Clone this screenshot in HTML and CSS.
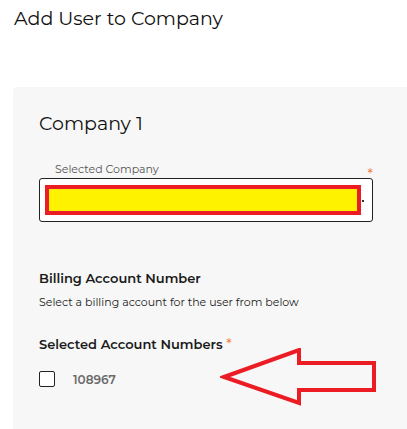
FILE: index.html
```html
<!DOCTYPE html>
<html>
<head>
<meta charset="utf-8">
<link rel="stylesheet" href="styles.css">
</head>
<body>
<h1 class="page-title">Add User to Company</h1>
<section class="card">
  <h2 class="company-title">Company 1</h2>
  <div class="field">
    <div class="field-head">
      <span class="field-label">Selected Company</span>
      <span class="req">*</span>
    </div>
    <div class="select">
      <div class="redact"></div>
      <span class="dot"></span>
    </div>
  </div>
  <h3 class="section-title">Billing Account Number</h3>
  <p class="section-desc">Select a billing account for the user from below</p>
  <h3 class="section-title sel">Selected Account Numbers <span class="req">*</span></h3>
  <label class="check-row">
    <span class="checkbox"></span>
    <span class="acct">108967</span>
  </label>
  <svg class="arrow" width="160" height="60" viewBox="0 0 160 60">
    <polygon points="4,29 79,2 79,15 154,15 154,42 79,42 79,55" fill="none" stroke="#ec1c24" stroke-width="4" stroke-linejoin="miter"/>
  </svg>
</section>
</body>
</html>
```
FILE: styles.css
```css
html, body {
  margin: 0;
  padding: 0;
  background: #ffffff;
  font-family: "Montserrat", "Noto Sans", "Open Sans", sans-serif;
  color: #1a1a1a;
}
body {
  width: 407px;
  height: 429px;
  overflow: hidden;
}
.page-title {
  margin: 0;
  padding: 6px 0 0 14px;
  font-size: 19px;
  font-weight: 400;
  line-height: 26px;
  color: #111;
}
.card {
  position: relative;
  box-sizing: border-box;
  margin: 55px 0 0 13px;
  background: #f7f7f7;
  border-top-left-radius: 4px;
  padding: 24px 34px 0 26px;
  height: 342px;
}
.company-title {
  margin: 0;
  font-size: 19px;
  font-weight: 400;
  line-height: 26px;
  color: #111;
}
.field {
  margin-top: 25px;
}
.field-head {
  display: flex;
  justify-content: space-between;
  padding-left: 16px;
  height: 14px;
}
.field-label {
  font-size: 11px;
  color: #555;
  line-height: 14px;
}
.req {
  color: #f4793f;
  font-size: 14px;
  font-weight: 400;
  line-height: 10px;
}
.field-head .req {
  margin-top: 7px;
}
.select {
  position: relative;
  margin-top: 2px;
  height: 42px;
  border: 1px solid #222;
  border-radius: 3px;
  background: #fff;
  display: flex;
  align-items: center;
  padding-left: 5px;
}
.redact {
  width: 308px;
  height: 22px;
  border: 4px solid #ec1c24;
  background: #fff200;
}
.dot {
  width: 2px;
  height: 2px;
  background: #333;
  margin-left: 1px;
  margin-top: 2px;
}
.section-title {
  margin: 47px 0 0 0;
  font-size: 13px;
  font-weight: 600;
  line-height: 18px;
  color: #1a1a1a;
}
.section-title.sel {
  margin-top: 26px;
}
.section-desc {
  margin: 8px 0 0 0;
  font-size: 11px;
  line-height: 14px;
  color: #222;
}
.check-row {
  display: flex;
  align-items: center;
  margin-top: 18px;
}
.checkbox {
  width: 14px;
  height: 14px;
  border: 1px solid #222;
  border-radius: 2px;
  background: #fff;
}
.acct {
  margin-left: 18px;
  font-size: 12px;
  font-weight: 600;
  color: #6b6b6b;
}
.arrow {
  position: absolute;
  left: 207px;
  top: 261px;
}
```
